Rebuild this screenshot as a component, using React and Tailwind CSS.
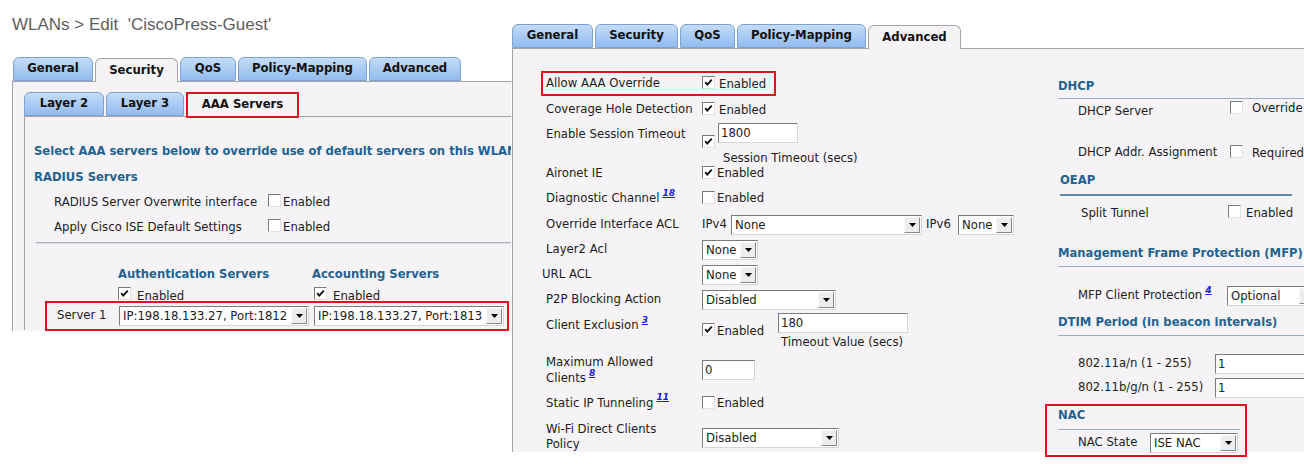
import React from 'react';

const BODY = "font-['DejaVu_Sans',Verdana,sans-serif] text-[11.7px] text-[#1c1c1c]";
const HEAD = "font-bold text-[11.6px] text-[#24628f] leading-[14px]";

const Check = ({ on = false, className = '' }) => (
  <span className={`inline-flex shrink-0 w-[13px] h-[13px] bg-white border border-[#7c7c7c] border-r-[#e2e2e2] border-b-[#e2e2e2] ${className}`}>
    {on && (
      <svg viewBox="0 0 11 11" className="w-[11px] h-[11px]">
        <path d="M2.2 5.2 L4.3 7.6 L8.8 2.6" stroke="#111" strokeWidth="1.9" fill="none" />
      </svg>
    )}
  </span>
);

const Select = ({ value, className = '' }) => (
  <div className={`flex items-center h-[20px] bg-white border border-[#7c7c7c] border-r-[#d6d6d6] border-b-[#d6d6d6] ${className}`}>
    <span className="flex-1 pl-[3px] whitespace-nowrap overflow-hidden leading-[16px]">{value}</span>
    <span className="shrink-0 w-[16px] h-[16px] mr-[1px] flex items-center justify-center bg-[#ededed] border border-[#fafafa] border-r-[#8a8a8a] border-b-[#8a8a8a]">
      <svg viewBox="0 0 7 4" className="w-[7px] h-[4px]">
        <path d="M0 0 H7 L3.5 4 Z" fill="#000" />
      </svg>
    </span>
  </div>
);

const Input = ({ value, className = '' }) => (
  <div className={`flex items-center h-[20px] bg-white border border-[#7c7c7c] border-r-[#d6d6d6] border-b-[#d6d6d6] pl-[2px] leading-[16px] ${className}`}>
    {value}
  </div>
);

const Ref = ({ n }) => (
  <sup className="ml-[3px] text-[9px] leading-none font-bold italic underline text-[#1a1aee] align-[2px]">{n}</sup>
);

const Tab = ({ label, w, active = false }) => (
  <div
    className={
      active
        ? `${w} h-[24px] -mb-px relative flex items-center justify-center rounded-t-[6px] border border-b-0 border-[#a4a4a4] bg-[#f5f3f6] font-bold text-[11.7px] text-[#111]`
        : `${w} h-[24px] flex items-center justify-center rounded-t-[6px] border border-[#7ea3d2] bg-gradient-to-b from-[#c4dcf8] to-[#92bbee] font-bold text-[11.7px] text-[#111]`
    }
  >
    {label}
  </div>
);

function LeftWindow() {
  return (
    <div className="absolute left-0 top-0 w-[512px] h-[332px] bg-white overflow-hidden">
      <div className="h-[57px] pl-[12px] pt-[14px] text-[17px] leading-[22px] text-[#5e5e5e] font-['Liberation_Sans',Arial,sans-serif] whitespace-pre">
        {"WLANs > Edit  'CiscoPress-Guest'"}
      </div>
      <div className="flex items-end gap-[2px] pl-[13px]">
        <Tab label="General" w="w-[80px]" />
        <Tab label="Security" w="w-[83px]" active />
        <Tab label="QoS" w="w-[56px]" />
        <Tab label="Policy-Mapping" w="w-[129px]" />
        <Tab label="Advanced" w="w-[92px]" />
      </div>
      <div className="ml-[12px] h-[250px] border-l border-t border-[#a4a4a4] bg-[#f5f3f6]">
        <div className="flex items-end gap-[2px] pl-[11px] pt-[10px]">
          <Tab label="Layer 2" w="w-[80px]" />
          <Tab label="Layer 3" w="w-[78px]" />
          <div className="w-[113px] h-[26px] -mb-[2px] relative flex items-center justify-center border-2 border-[#e0141e] bg-[#f5f3f6] font-bold text-[11.7px] text-[#111]">
            AAA Servers
          </div>
        </div>
        <div className="ml-[11px] h-[214px] border-l border-t border-[#a4a4a4]">
          <div className={`${HEAD} pl-[9px] mt-[27px] whitespace-nowrap`}>
            Select AAA servers below to override use of default servers on this WLAN
          </div>
          <div className={`${HEAD} pl-[9px] mt-[12px]`}>RADIUS Servers</div>
          <div className="flex items-center h-[25px] mt-[6px] pl-[29px]">
            <span className="w-[214px]">RADIUS Server Overwrite interface</span>
            <Check className="-mt-[4px]" />
            <span className="ml-[2px]">Enabled</span>
          </div>
          <div className="flex items-center h-[25px] pl-[29px]">
            <span className="w-[214px]">Apply Cisco ISE Default Settings</span>
            <Check className="-mt-[4px]" />
            <span className="ml-[2px]">Enabled</span>
          </div>
          <div className="ml-[11px] mt-[2px] h-[2px] border-t border-[#aab0bd] border-b border-b-[#dcdde4]" />
          <div className={`${HEAD} flex mt-[23px] pl-[93px]`}>
            <span className="w-[194px]">Authentication Servers</span>
            <span>Accounting Servers</span>
          </div>
          <div className="flex mt-[6px] h-[14px] pl-[93px]">
            <div className="w-[196px] flex items-start">
              <Check on />
              <span className="ml-[6px] mt-[2px] leading-[14px]">Enabled</span>
            </div>
            <div className="flex items-start">
              <Check on />
              <span className="ml-[6px] mt-[2px] leading-[14px]">Enabled</span>
            </div>
          </div>
          <div className="relative ml-[20px] w-[464px] h-[30px] border-2 border-[#e0141e] bg-[#f5f3f6] flex items-center pl-[10px]">
            <span className="w-[62px]">Server 1</span>
            <Select value="IP:198.18.133.27, Port:1812" className="w-[190px]" />
            <Select value="IP:198.18.133.27, Port:1813" className="w-[190px] ml-[5px]" />
          </div>
        </div>
      </div>
    </div>
  );
}

const Row = ({ label, h = 'h-[25px]', children, labelClass = '' }) => (
  <div className={`flex items-center ${h} pl-[5px]`}>
    <span className={`w-[156px] shrink-0 ${labelClass}`}>{label}</span>
    {children}
  </div>
);

function LeftColumn() {
  return (
    <div className="w-[504px] shrink-0 ml-[28px] pt-[22px]">
      <div className="flex items-center h-[25px] w-[235px] border-2 border-[#e0141e] pl-[3px]">
        <span className="w-[156px] shrink-0">Allow AAA Override</span>
        <Check on className="-mt-[3px]" />
        <span className="ml-[4px] mt-[2px]">Enabled</span>
      </div>
      <div className="flex items-center h-[27px] pl-[5px]">
        <span className="w-[156px] shrink-0">Coverage Hole Detection</span>
        <Check on className="-mt-[3px]" />
        <span className="ml-[4px] mt-[2px]">Enabled</span>
      </div>
      <div className="flex h-[39px] pl-[5px]">
        <span className="w-[156px] shrink-0 pt-[4px] leading-[14px]">Enable Session Timeout</span>
        <div className="flex flex-col">
          <div className="flex items-start">
            <Check on className="mt-[12px]" />
            <Input value="1800" className="w-[80px] ml-[3px]" />
          </div>
          <span className="ml-[21px] mt-[3px] leading-[14px]">Session Timeout (secs)</span>
        </div>
      </div>
      <Row label="Aironet IE" h="h-[24px]">
        <Check on className="-mt-[3px]" />
        <span className="ml-[2px]">Enabled</span>
      </Row>
      <Row label={<>Diagnostic Channel<Ref n="18" /></>} h="h-[26px]">
        <Check className="-mt-[3px]" />
        <span className="ml-[2px]">Enabled</span>
      </Row>
      <Row label="Override Interface ACL">
        <span className="w-[29px]">IPv4</span>
        <Select value="None" className="w-[191px]" />
        <span className="ml-[4px] w-[32px]">IPv6</span>
        <Select value="None" className="w-[56px]" />
      </Row>
      <Row label="Layer2 Acl">
        <Select value="None" className="w-[56px]" />
      </Row>
      <Row label="URL ACL" labelClass="-ml-[4px] mr-[4px]">
        <Select value="None" className="w-[56px]" />
      </Row>
      <Row label="P2P Blocking Action">
        <Select value="Disabled" className="w-[134px]" />
      </Row>
      <div className="flex h-[38px] pl-[5px]">
        <span className="w-[156px] shrink-0 pt-[6px] leading-[14px]">Client Exclusion<Ref n="3" /></span>
        <div className="w-[76px] flex items-start pt-[11px]">
          <Check on />
          <span className="ml-[2px] mt-[1px] leading-[14px]">Enabled</span>
        </div>
        <div className="flex flex-col pt-[1px]">
          <Input value="180" className="w-[130px]" />
          <span className="ml-[3px] mt-[2px] leading-[14px]">Timeout Value (secs)</span>
        </div>
      </div>
      <div className="flex h-[40px] pl-[5px]">
        <span className="w-[156px] shrink-0 pt-[4px] leading-[16px]">
          Maximum Allowed
          <br />
          Clients<Ref n="8" />
        </span>
        <Input value="0" className="w-[53px] mt-[10px]" />
      </div>
      <Row label={<>Static IP Tunneling<Ref n="11" /></>} h="h-[27px]">
        <Check className="-mt-[3px]" />
        <span className="ml-[2px]">Enabled</span>
      </Row>
      <div className="flex h-[35px] pl-[5px]">
        <span className="w-[156px] shrink-0 pt-[5px] leading-[15px]">
          Wi-Fi Direct Clients
          <br />
          Policy
        </span>
        <Select value="Disabled" className="w-[137px] mt-[11px]" />
      </div>
    </div>
  );
}

function RightColumn() {
  return (
    <div className="w-[259px] shrink-0 pt-[30px]">
      <div className={`${HEAD} pl-[13px]`}>DHCP</div>
      <div className="ml-[13px] mt-[5px] h-px bg-[#93adc4]" />
      <div className="flex h-[41px] pl-[33px]">
        <span className="w-[152px] shrink-0 pt-[5px] leading-[14px]">DHCP Server</span>
        <div className="flex items-start pt-[2px]">
          <Check />
          <span className="ml-[9px] leading-[14px]">Override</span>
        </div>
      </div>
      <div className="flex h-[26px] pl-[33px]">
        <span className="w-[152px] shrink-0 pt-[5px] leading-[14px] whitespace-nowrap">DHCP Addr. Assignment</span>
        <div className="flex items-start pt-[5px]">
          <Check />
          <span className="ml-[9px] mt-[1px] leading-[14px]">Required</span>
        </div>
      </div>
      <div className={`${HEAD} pl-[15px] mt-[7px]`}>OEAP</div>
      <div className="ml-[15px] mt-[7px] w-[232px] h-[2px] bg-[#5f8aab]" />
      <div className="flex h-[34px] pl-[36px]">
        <span className="w-[147px] shrink-0 pt-[10px] leading-[14px]">Split Tunnel</span>
        <div className="flex items-start pt-[9px]">
          <Check />
          <span className="ml-[5px] mt-[1px] leading-[14px]">Enabled</span>
        </div>
      </div>
      <div className={`${HEAD} pl-[13px] mt-[16px] whitespace-nowrap`}>Management Frame Protection (MFP)</div>
      <div className="ml-[13px] mt-[6px] h-px bg-[#93adc4]" />
      <div className="flex items-center h-[20px] mt-[19px] pl-[33px]">
        <span className="w-[149px] shrink-0 whitespace-nowrap">MFP Client Protection<Ref n="4" /></span>
        <Select value="Optional" className="w-[90px] shrink-0" />
      </div>
      <div className={`${HEAD} pl-[13px] mt-[9px] whitespace-nowrap`}>DTIM Period (in beacon intervals)</div>
      <div className="ml-[13px] mt-[6px] h-px bg-[#93adc4]" />
      <div className="flex items-center h-[20px] mt-[18px] pl-[33px]">
        <span className="w-[137px] shrink-0">802.11a/n (1 - 255)</span>
        <Input value="1" className="w-[100px] shrink-0" />
      </div>
      <div className="flex items-center h-[20px] mt-[4px] pl-[33px]">
        <span className="w-[137px] shrink-0 whitespace-nowrap">802.11b/g/n (1 - 255)</span>
        <Input value="1" className="w-[100px] shrink-0" />
      </div>
      <div className="mt-[6px] w-[202px] h-[53px] border-2 border-[#e0141e]">
        <div className={`${HEAD} pl-[11px] pt-[2px]`}>NAC</div>
        <div className="ml-[11px] mt-[7px] w-[182px] h-px bg-[#93adc4]" />
        <div className="flex items-center h-[19px] mt-[3px] pl-[31px]">
          <span className="w-[72px] shrink-0">NAC State</span>
          <Select value="ISE NAC" className="w-[88px]" />
        </div>
      </div>
    </div>
  );
}

function RightWindow() {
  return (
    <div className="absolute left-[511px] top-0 w-[793px] h-[464px] bg-white overflow-hidden">
      <div className="flex items-end gap-[2px] pl-[1px] pt-[24px]">
        <Tab label="General" w="w-[81px]" />
        <Tab label="Security" w="w-[83px]" />
        <Tab label="QoS" w="w-[55px]" />
        <Tab label="Policy-Mapping" w="w-[129px]" />
        <Tab label="Advanced" w="w-[93px]" active />
      </div>
      <div className="ml-[1px] h-[404px] border-l border-t border-[#a4a4a4] bg-[#f5f3f6] flex">
        <LeftColumn />
        <RightColumn />
      </div>
    </div>
  );
}

export default function App() {
  return (
    <div className={`relative w-[1304px] h-[464px] bg-white overflow-hidden ${BODY}`}>
      <LeftWindow />
      <RightWindow />
    </div>
  );
}
